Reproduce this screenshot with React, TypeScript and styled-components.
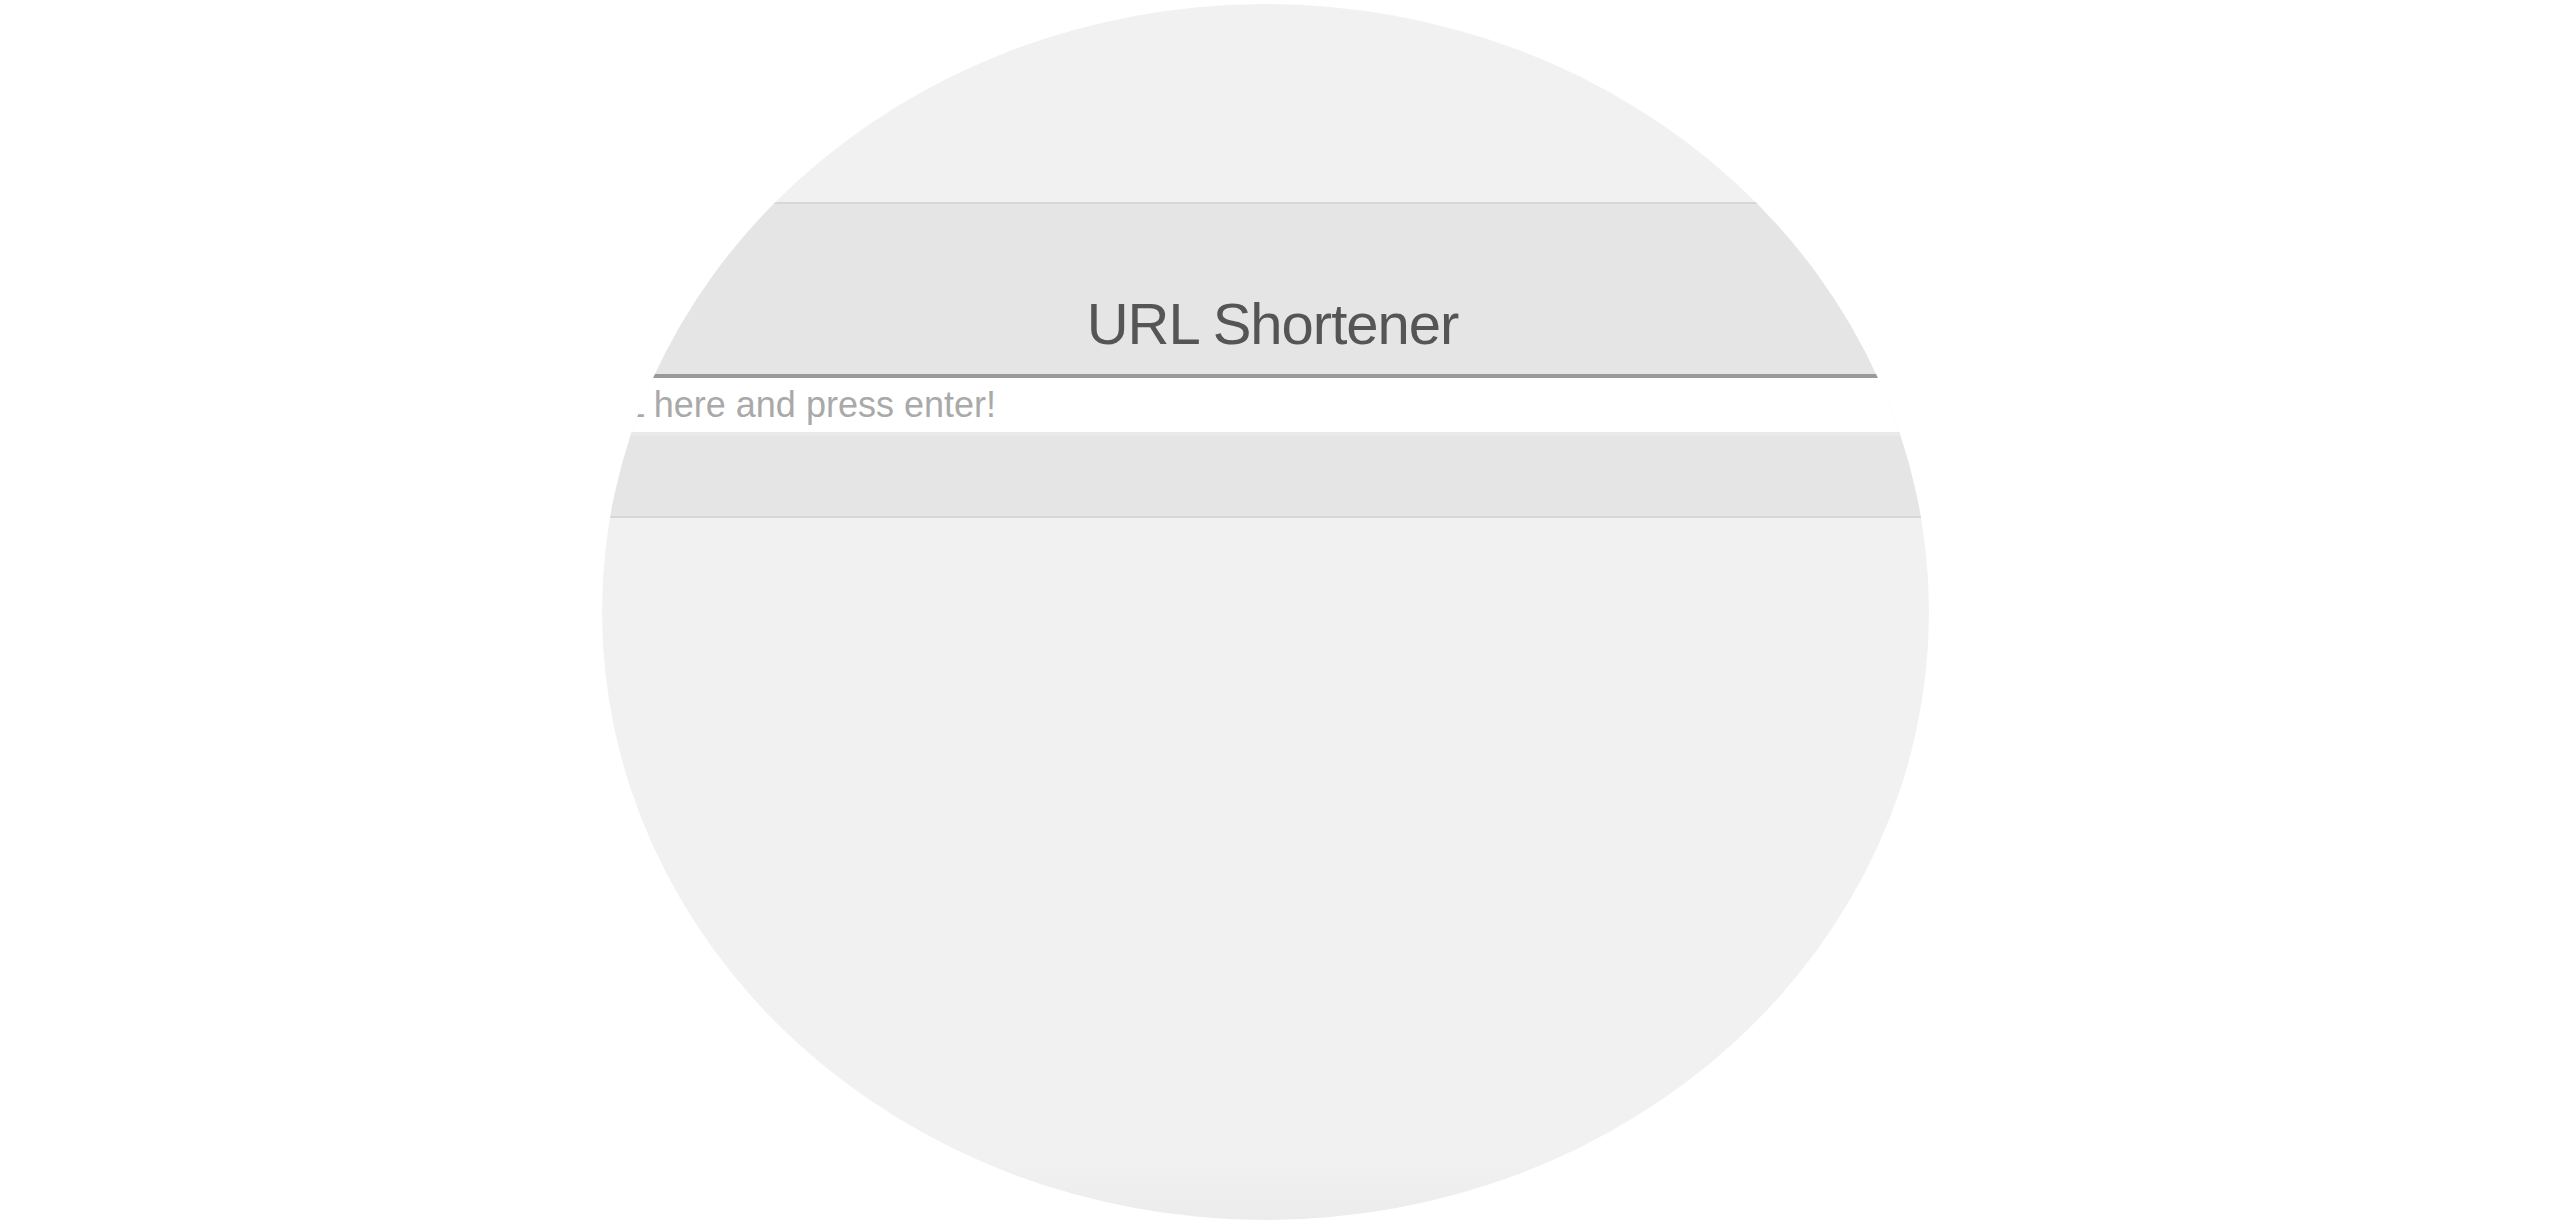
import React from "react";
import styled, { createGlobalStyle } from "styled-components";

const GlobalStyle = createGlobalStyle`
  html, body {
    margin: 0;
    padding: 0;
    background: #ffffff;
    font-family: "Liberation Sans", Arial, Helvetica, sans-serif;
  }
  input::placeholder {
    color: #a9a9a9;
    opacity: 1;
  }
`;

const Page = styled.main`
  display: flex;
  justify-content: flex-start;
  padding: 4px 0 0 602px;
  min-height: 1227px;
  box-sizing: border-box;
`;

const Oval = styled.section`
  width: 1327px;
  height: 1216px;
  border-radius: 50%;
  overflow: hidden;
  background: linear-gradient(to bottom, #f1f1f1 0%, #f1f1f1 95%, #ececec 100%);
  padding-top: 198px;
  box-sizing: border-box;
  display: flex;
  flex-direction: column;
`;

const Header = styled.header`
  height: 176px;
  box-sizing: border-box;
  background: #e5e5e5;
  border-top: 2px solid #d7d7d7;
  border-bottom: 4px solid #999999;
  display: flex;
  align-items: flex-end;
  justify-content: center;
  padding: 0 0 21px 14px;
`;

const Title = styled.h1`
  margin: 0;
  font-family: "Liberation Sans", Arial, Helvetica, sans-serif;
  font-weight: 400;
  font-size: 58px;
  line-height: 58px;
  letter-spacing: -1px;
  color: #555555;
`;

const InputRow = styled.div`
  height: 54px;
  background: #ffffff;
  display: flex;
`;

const UrlInput = styled.input`
  flex: none;
  width: calc(100% + 211px);
  margin-left: -211px;
  height: 54px;
  padding: 0;
  border: none;
  outline: none;
  background: transparent;
  font-family: "Liberation Sans", Arial, Helvetica, sans-serif;
  font-size: 36px;
  color: #555555;
`;

const ResultBand = styled.div`
  height: 86px;
  box-sizing: border-box;
  background: #e5e5e5;
  border-top: 4px solid #e9e9e9;
  border-bottom: 2px solid #d6d6d6;
`;

export default function App() {
  return (
    <>
      <GlobalStyle />
      <Page>
        <Oval>
          <Header>
            <Title>URL Shortener</Title>
          </Header>
          <InputRow>
            <UrlInput type="text" placeholder="Paste your URL here and press enter!" />
          </InputRow>
          <ResultBand />
        </Oval>
      </Page>
    </>
  );
}
